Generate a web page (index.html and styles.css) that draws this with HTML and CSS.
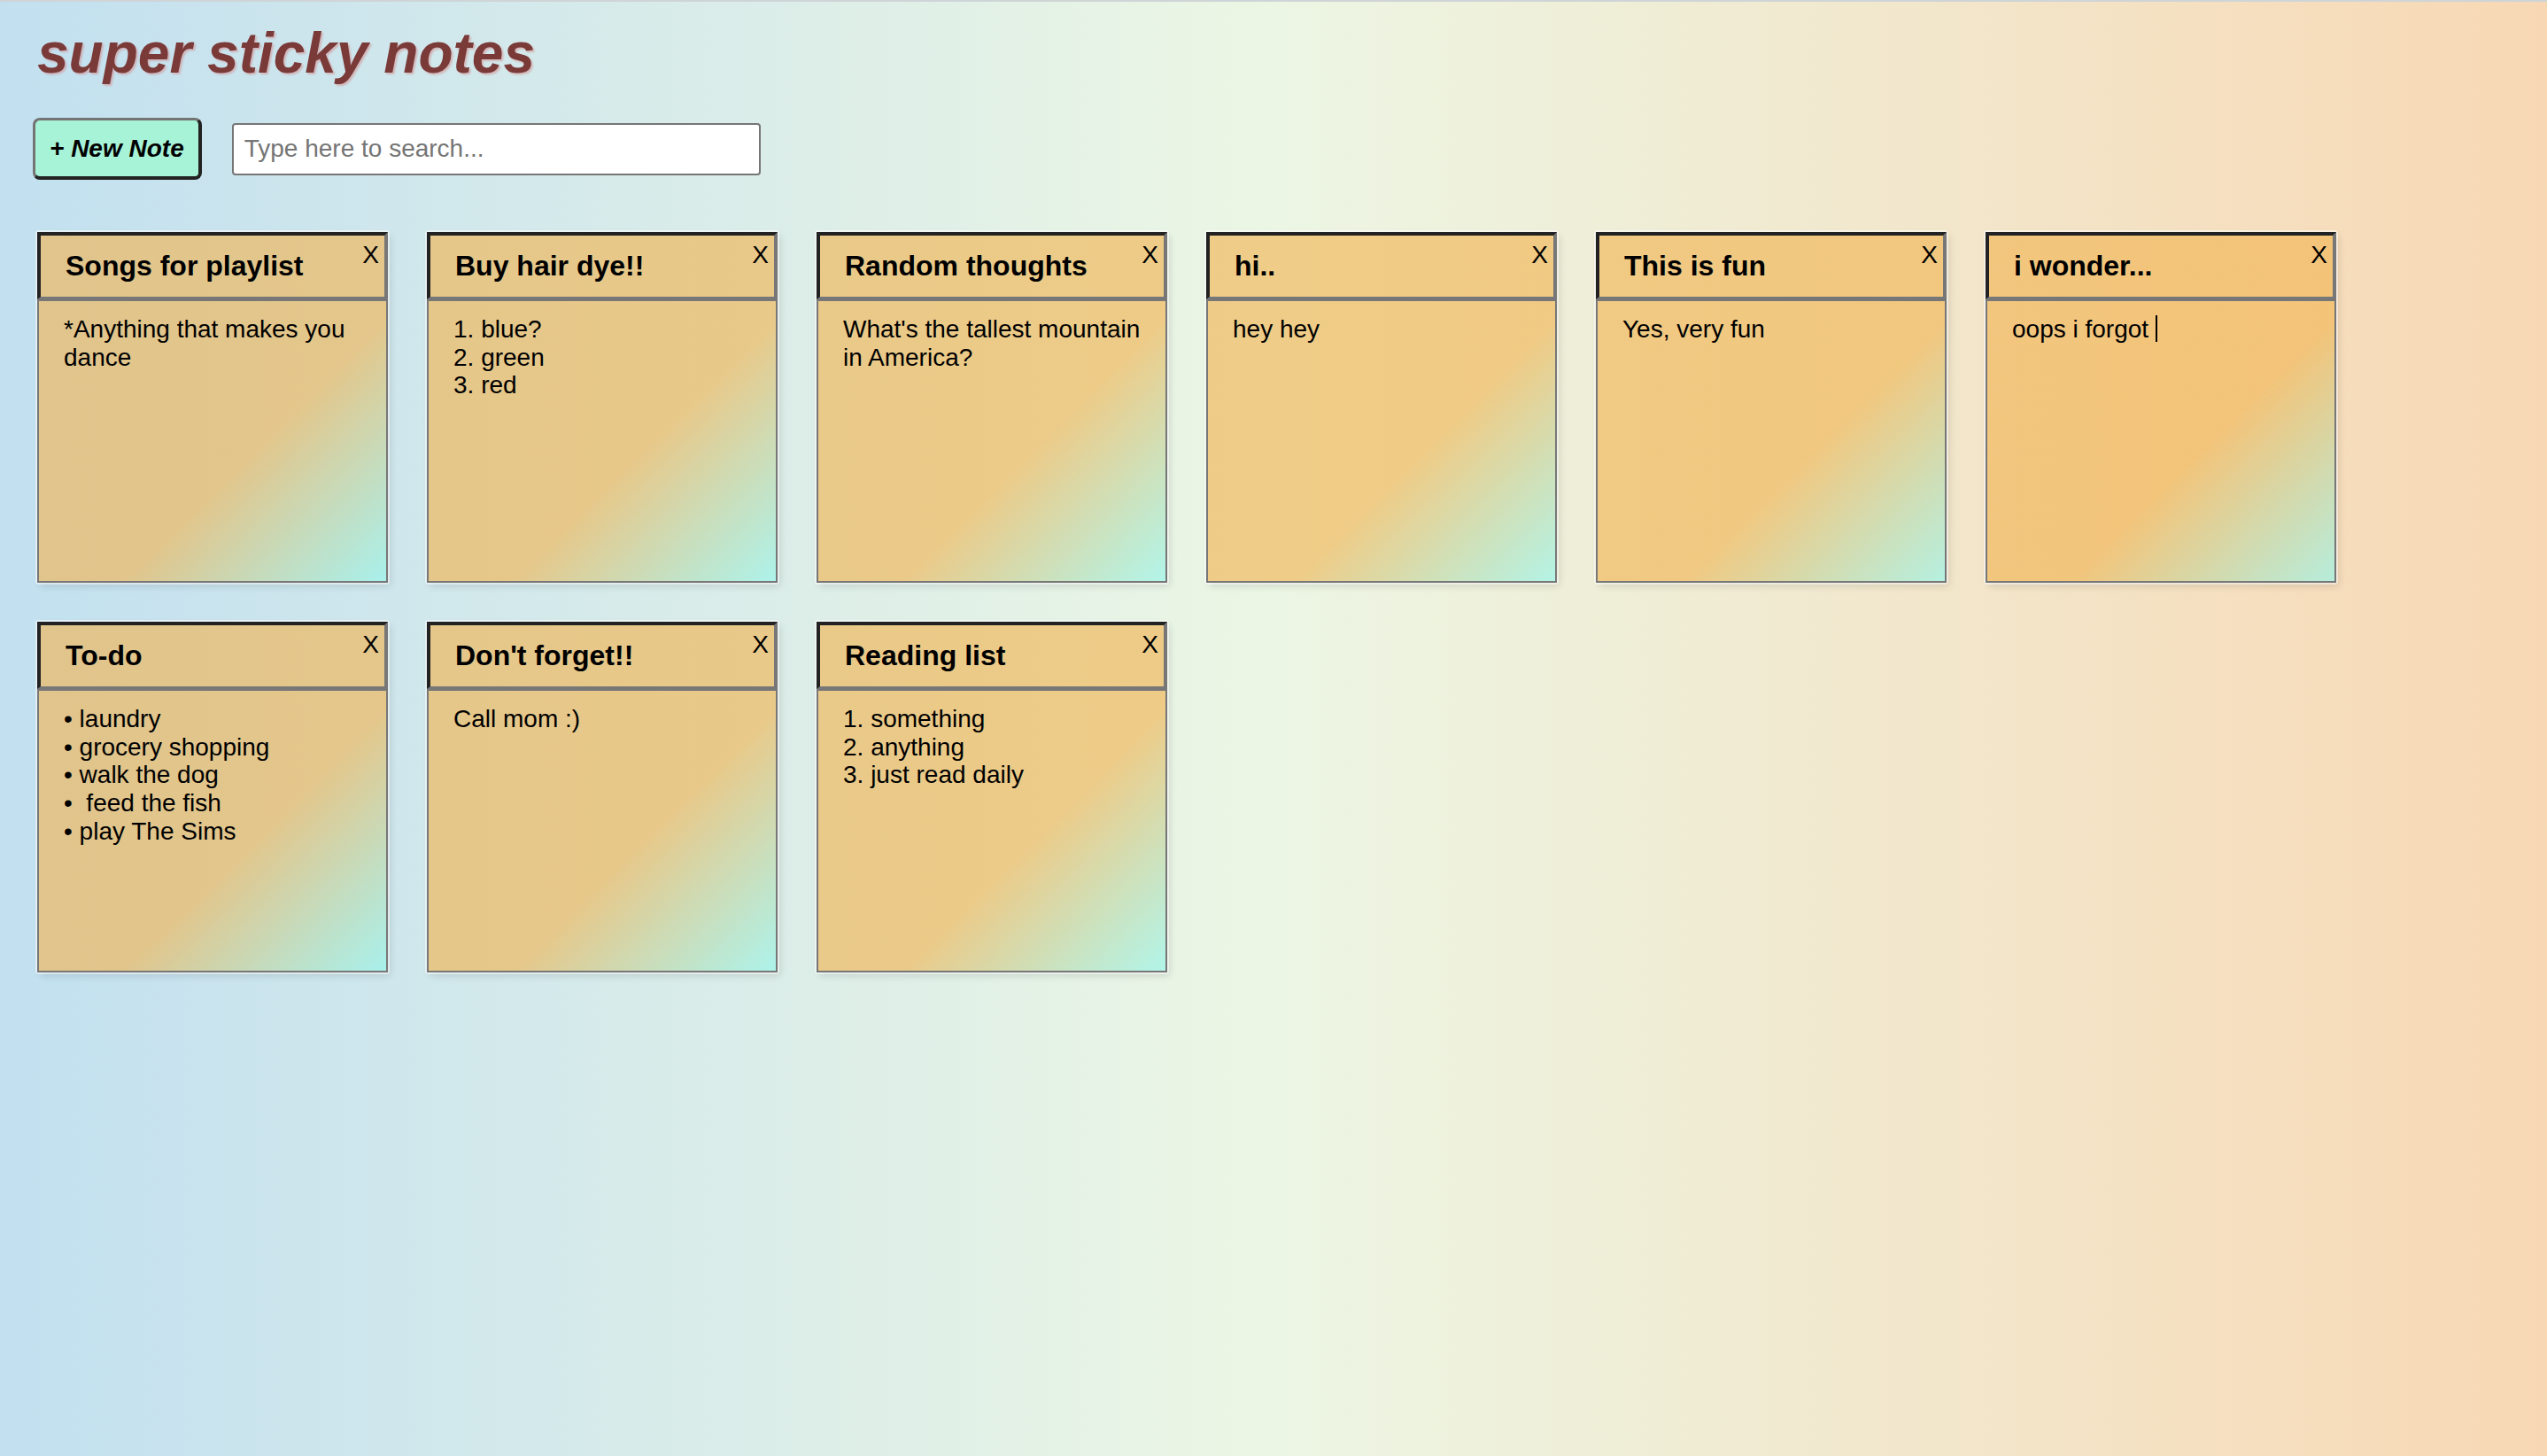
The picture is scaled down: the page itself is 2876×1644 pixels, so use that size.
FILE: index.html
```html
<!DOCTYPE html>
<html lang="en">
<head>
<meta charset="utf-8">
<title>super sticky notes</title>
<link rel="stylesheet" href="styles.css">
</head>
<body>
  <header class="app-header">
    <h1 class="app-title">super sticky notes</h1>
    <div class="toolbar">
      <button class="new-note">+ New Note</button>
      <input class="search" type="text" placeholder="Type here to search...">
    </div>
  </header>
  <main class="notes">
    <div class="note">
      <div class="note-title">Songs for playlist</div>
      <button class="note-close">X</button>
      <div class="note-body">*Anything that makes you dance</div>
    </div>
    <div class="note">
      <div class="note-title">Buy hair dye!!</div>
      <button class="note-close">X</button>
      <div class="note-body">1. blue?
2. green
3. red</div>
    </div>
    <div class="note">
      <div class="note-title">Random thoughts</div>
      <button class="note-close">X</button>
      <div class="note-body">What's the tallest mountain in America?</div>
    </div>
    <div class="note">
      <div class="note-title">hi..</div>
      <button class="note-close">X</button>
      <div class="note-body">hey hey</div>
    </div>
    <div class="note">
      <div class="note-title">This is fun</div>
      <button class="note-close">X</button>
      <div class="note-body">Yes, very fun</div>
    </div>
    <div class="note">
      <div class="note-title">i wonder...</div>
      <button class="note-close">X</button>
      <div class="note-body">oops i forgot <span class="caret"></span></div>
    </div>
    <div class="note">
      <div class="note-title">To-do</div>
      <button class="note-close">X</button>
      <div class="note-body">• laundry
• grocery shopping
• walk the dog
•  feed the fish
• play The Sims</div>
    </div>
    <div class="note">
      <div class="note-title">Don't forget!!</div>
      <button class="note-close">X</button>
      <div class="note-body">Call mom :)</div>
    </div>
    <div class="note">
      <div class="note-title">Reading list</div>
      <button class="note-close">X</button>
      <div class="note-body">1. something
2. anything
3. just read daily</div>
    </div>
  </main>
</body>
</html>
```

FILE: styles.css
```css
* {
  box-sizing: border-box;
}

html {
  height: 100%;
}

body {
  margin: 0;
  min-height: 100%;
  border-top: 2px solid #cfd4d7;
  font-family: "Liberation Sans", Arial, sans-serif;
  font-size: 28px;
  color: #000;
  background: linear-gradient(90deg, #c2e0f0 0%, #ecf6e4 50%, #f8d8b4 100%);
  background-attachment: fixed;
}

.app-header {
  display: flex;
  flex-direction: column;
}

.app-title {
  margin: 21px 0 0 42px;
  font-size: 64px;
  font-weight: bold;
  font-style: italic;
  line-height: normal;
  color: #7a3a38;
  text-shadow: 2px 2px 2px rgba(215, 125, 125, 0.45);
}

.toolbar {
  display: flex;
  align-items: center;
  gap: 34px;
  margin-top: 36px;
  padding-left: 37px;
}

.new-note {
  height: 70px;
  padding: 0 16px;
  font-family: "Liberation Sans", Arial, sans-serif;
  font-size: 28px;
  font-weight: bold;
  font-style: italic;
  color: #000;
  background: #a6f3d8;
  border-style: solid;
  border-width: 3px 4px 4px 3px;
  border-color: #747474 #222 #222 #747474;
  border-radius: 8px;
}

.search {
  width: 597px;
  height: 59px;
  padding: 0 12px;
  font-family: "Liberation Sans", Arial, sans-serif;
  font-size: 28px;
  color: #000;
  background: #fff;
  border: 2px solid #767676;
  border-radius: 4px;
}

.search::placeholder {
  color: #757575;
}

.notes {
  display: flex;
  flex-wrap: wrap;
  gap: 44px;
  margin-top: 59px;
  padding-left: 42px;
}

.note {
  position: relative;
  display: flex;
  flex-direction: column;
  width: 396px;
  height: 396px;
  background: linear-gradient(135deg, rgba(241, 180, 81, 0.63) 62%, rgba(148, 246, 238, 0.66) 100%);
  border-radius: 2px;
  box-shadow: 0 0 0 2px rgba(255, 255, 255, 0.55), 3px 4px 8px rgba(0, 0, 0, 0.12);
}

.note-title {
  display: flex;
  align-items: center;
  height: 76px;
  padding-left: 28px;
  font-size: 32px;
  font-weight: bold;
  border-style: solid;
  border-width: 4px 4px 3px 4px;
  border-color: #222 #777 #777 #222;
}

.note-close {
  position: absolute;
  top: 10px;
  right: 10px;
  padding: 0;
  font-family: "Liberation Sans", Arial, sans-serif;
  font-size: 28px;
  line-height: normal;
  color: #000;
  background: none;
  border: none;
}

.note-body {
  flex: 1;
  padding: 16px 28px;
  line-height: 31.7px;
  white-space: pre-wrap;
  border: 2px solid #777;
}

.caret {
  display: inline-block;
  width: 2px;
  height: 30px;
  vertical-align: top;
  background: #000;
}
```
